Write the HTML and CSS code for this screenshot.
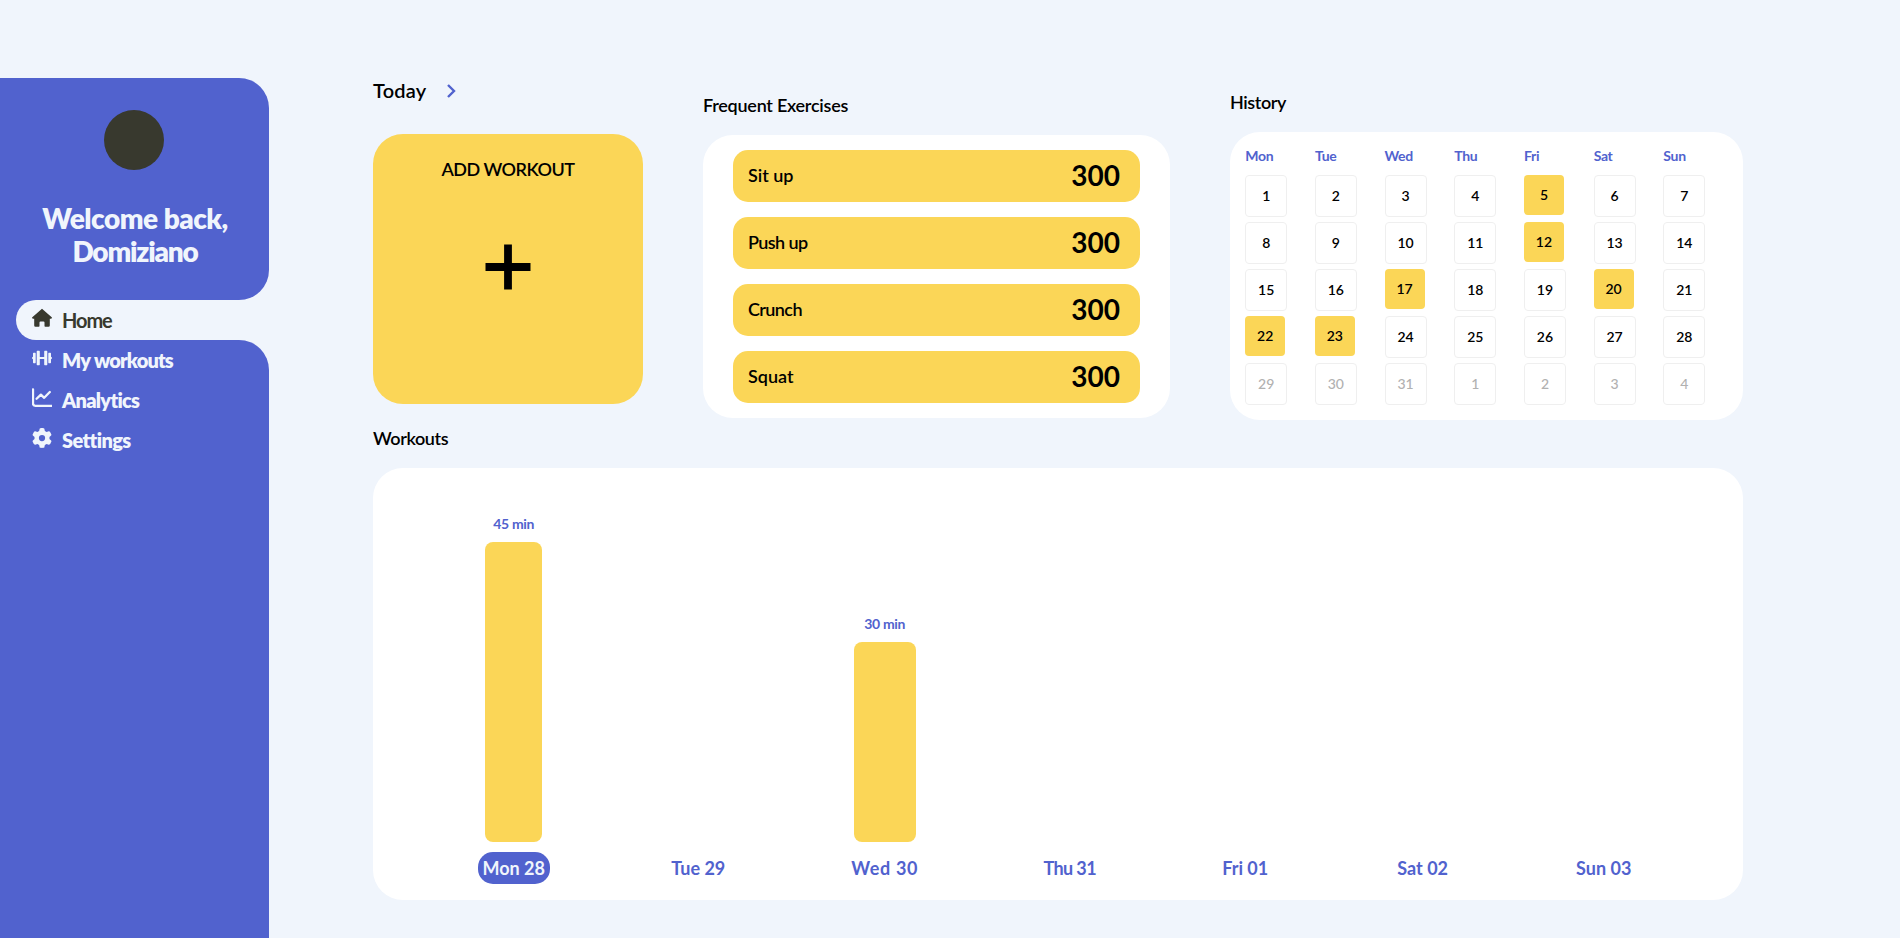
FILE: index.html
```
<!DOCTYPE html>
<html lang="en">
<head>
<meta charset="utf-8">
<title>Workout dashboard</title>
<link rel="stylesheet" href="styles.css">
</head>
<body>
<div class="app">
  <aside class="sidebar">
    <section class="profile">
      <div class="avatar"></div>
      <p class="greeting">Welcome back,<br><span class="username">Domiziano</span></p>
    </section>
    <div class="menu-active">
      <a class="menu-item active"><svg class="menu-icon" viewBox="0 0 20 20"><path d="M10 .8 20 9.600q-.2 1.200-1.200 1.200H17.800v6.700q0 1.300-1.300 1.300h-3.300q-.7 0-.7-.7v-3.600q0-1-1-1h-3q-1 0-1 1v3.600q0 .7-.7.700H3.500q-1.300 0-1.300-1.300v-6.700H1.200Q.2 10.800 0 9.600z"/></svg><span class="t-home">Home</span></a>
    </div>
    <nav class="menu">
      <a class="menu-item"><svg class="menu-icon" viewBox="0 0 20 20"><path d="M5.300 2.800h1.900q.6 0 .6.600v5.700h4.400V3.400q0-.6.600-.6h1.900q.6 0 .6.600v13.200q0 .6-.6.600h-1.900q-.6 0-.6-.6v-5.700H7.800v5.700q0 .6-.6.600H5.300q-.6 0-.6-.6V3.400q0-.6.600-.6zM1.700 4.800h1.400q.6 0 .6.600v9.200q0 .6-.6.600H1.700q-.7 0-.7-.6v-3.400q-1-.2-1-1.200t1-1.200V5.400q0-.6.700-.6zm15.200 0h1.400q.7 0 .7.600v3.400q1 .2 1 1.200t-1 1.200v3.400q0 .6-.7.600h-1.400q-.6 0-.6-.6V5.400q0-.6.600-.6z"/></svg><span class="t-workouts">My workouts</span></a>
      <a class="menu-item"><svg class="menu-icon" viewBox="0 0 20 20"><path class="line" d="M1 1.300v14.200q0 2.300 2.300 2.300H20M4.600 10.800l4.300-4.200 3.300 3.200 5.600-5.800"/></svg><span class="t-analytics">Analytics</span></a>
      <a class="menu-item"><svg class="menu-icon" viewBox="0 0 512 512"><path d="M495.900 166.600c3.200 8.700.5 18.400-6.400 24.600l-43.300 39.400c1.100 8.300 1.700 16.800 1.700 25.400s-.6 17.100-1.700 25.400l43.300 39.400c6.900 6.200 9.600 15.900 6.400 24.600-4.400 11.900-9.700 23.300-15.800 34.300l-4.700 8.100c-6.600 11-14 21.400-22.100 31.200-5.900 7.200-15.700 9.600-24.500 6.800l-55.700-17.700c-13.400 10.300-28.200 18.900-44 25.400l-12.500 57.100c-2 9.100-9 16.300-18.200 17.800-13.800 2.300-28 3.500-42.500 3.500s-28.700-1.200-42.500-3.500c-9.200-1.500-16.200-8.700-18.200-17.800l-12.500-57.100c-15.800-6.500-30.600-15.100-44-25.400L83.100 425.900c-8.800 2.800-18.600.3-24.500-6.800-8.100-9.800-15.500-20.200-22.100-31.200l-4.700-8.100c-6.100-11-11.400-22.400-15.800-34.300-3.200-8.700-.5-18.400 6.400-24.600l43.300-39.400C64.600 273.100 64 264.600 64 256s.6-17.100 1.700-25.400L22.400 191.200c-6.900-6.200-9.600-15.900-6.400-24.600 4.400-11.900 9.700-23.300 15.800-34.300l4.700-8.100c6.600-11 14-21.400 22.100-31.200 5.900-7.200 15.700-9.600 24.500-6.800l55.700 17.700c13.400-10.300 28.200-18.900 44-25.400l12.500-57.100c2-9.100 9-16.300 18.200-17.800C227.300 1.200 241.500 0 256 0s28.700 1.200 42.500 3.500c9.200 1.500 16.200 8.700 18.200 17.800l12.500 57.100c15.800 6.500 30.600 15.100 44 25.400l55.700-17.700c8.800-2.800 18.600-.3 24.500 6.800 8.100 9.800 15.500 20.200 22.100 31.200l4.700 8.100c6.100 11 11.400 22.400 15.800 34.300zM256 336a80 80 0 1 0 0-160 80 80 0 1 0 0 160z"/></svg><span class="t-settings">Settings</span></a>
    </nav>
  </aside>
  <main class="main">
    <div class="top">
      <section class="today">
        <h2 class="today-title">Today<svg class="chevron" viewBox="0 0 10 16"><path d="M2 2l6 6-6 6"/></svg></h2>
        <button class="add-card"><span class="add-label">ADD WORKOUT</span><svg class="plus" viewBox="0 0 46 46"><path d="M23 .5v45M.5 23h45"/></svg></button>
      </section>
      <section class="frequent">
        <h3 class="title frequent-title">Frequent Exercises</h3>
        <div class="exercise-list">
          <div class="exercise"><span class="exercise-name">Sit up</span><span class="exercise-count">300</span></div>
          <div class="exercise"><span class="exercise-name tight">Push up</span><span class="exercise-count">300</span></div>
          <div class="exercise"><span class="exercise-name tight">Crunch</span><span class="exercise-count">300</span></div>
          <div class="exercise"><span class="exercise-name">Squat</span><span class="exercise-count">300</span></div>
        </div>
      </section>
      <section class="history">
        <h3 class="title history-title">History</h3>
        <div class="calendar">
          <span class="weekday">Mon</span><span class="weekday">Tue</span><span class="weekday">Wed</span><span class="weekday">Thu</span><span class="weekday">Fri</span><span class="weekday">Sat</span><span class="weekday">Sun</span>
          <span class="day">1</span><span class="day">2</span><span class="day">3</span><span class="day">4</span><span class="day done">5</span><span class="day">6</span><span class="day">7</span>
          <span class="day">8</span><span class="day">9</span><span class="day">10</span><span class="day">11</span><span class="day done">12</span><span class="day">13</span><span class="day">14</span>
          <span class="day">15</span><span class="day">16</span><span class="day done">17</span><span class="day">18</span><span class="day">19</span><span class="day done">20</span><span class="day">21</span>
          <span class="day done">22</span><span class="day done">23</span><span class="day">24</span><span class="day">25</span><span class="day">26</span><span class="day">27</span><span class="day">28</span>
          <span class="day other">29</span><span class="day other">30</span><span class="day other">31</span><span class="day other">1</span><span class="day other">2</span><span class="day other">3</span><span class="day other">4</span>
        </div>
      </section>
    </div>
    <section class="workouts">
      <h3 class="title workouts-title">Workouts</h3>
      <div class="chart">
        <div class="column mon"><span class="minutes">45 min</span><div class="bar" style="height:300px"></div><span class="date current">Mon 28</span></div>
        <div class="column tue"><span class="date">Tue 29</span></div>
        <div class="column wed"><span class="minutes">30 min</span><div class="bar" style="height:200px"></div><span class="date">Wed 30</span></div>
        <div class="column thu"><span class="date">Thu 31</span></div>
        <div class="column fri"><span class="date">Fri 01</span></div>
        <div class="column sat"><span class="date">Sat 02</span></div>
        <div class="column sun"><span class="date">Sun 03</span></div>
      </div>
    </section>
  </main>
</div>
</body>
</html>
```
FILE: styles.css
```
* { box-sizing: border-box; }
:root { --bg: #f0f5fc; --purple: #5162ce; --yellow: #fbd657; --dark: #38392e; }
body { margin: 0; background: var(--bg); color: #000; font-family: Lato, "Liberation Sans", sans-serif; font-weight: 700; }
h2, h3, p { margin: 0; font-weight: 600; }
.app { display: flex; height: 938px; overflow: hidden; }

/* Sidebar */
.sidebar { width: 269px; padding-top: 78px; display: flex; flex-direction: column; flex-shrink: 0; }
.profile { height: 222px; padding: 32px 1px 0 0; display: flex; flex-direction: column; align-items: center; gap: 32px; background: var(--purple); border-radius: 0 30px 30px 0; }
.avatar { width: 60px; height: 60px; border-radius: 50%; background: var(--dark); }
.greeting { padding-left: 2px; font-size: 28px; line-height: 33px; font-weight: 800; text-align: center; color: var(--bg); letter-spacing: -0.5px; }
.username { letter-spacing: -1.200px; }
.menu-active { background: var(--purple); }
.menu-active .menu-item { margin-left: 16px; padding-left: 16px; background: var(--bg); border-radius: 20px 0 0 20px; color: var(--dark); font-weight: 700; }
.menu { flex: 1; background: var(--purple); border-top-right-radius: 30px; color: var(--bg); }
.menu-item { display: flex; align-items: center; gap: 10px; height: 40px; padding-left: 32px; font-size: 20px; line-height: 40px; font-weight: 800; }
.menu-icon { width: 20px; height: 20px; margin-bottom: 4px; fill: currentColor; }
.line { fill: none; stroke: currentColor; stroke-width: 2.300; stroke-linejoin: round; stroke-linecap: round; }
.t-home { letter-spacing: -1.100px; }
.t-workouts { letter-spacing: -0.85px; word-spacing: 1px; }
.t-analytics { letter-spacing: -0.7px; }
.t-settings { letter-spacing: -0.6px; }

/* Content */
.main { width: 1370px; margin-left: 104px; padding-top: 78px; }
.top { display: flex; height: 349px; }
.title { font-size: 18px; line-height: 23px; letter-spacing: -0.25px; }
.today { width: 270px; }
.today-title { display: flex; align-items: center; gap: 20px; font-size: 20px; line-height: 24px; letter-spacing: 0.2px; }
.chevron { width: 10px; height: 16px; margin-top: 2px; fill: none; stroke: var(--purple); stroke-width: 2.400; }
.add-card { display: flex; flex-direction: column; align-items: center; width: 270px; height: 270px; margin-top: 32px; padding: 24px 0 0; border: 0; border-radius: 30px; background: var(--yellow); font: inherit; font-weight: 600; color: inherit; }
.add-label { font-size: 18px; line-height: 22px; letter-spacing: -0.5px; }
.plus { width: 46px; height: 46px; margin-top: 64px; stroke: #000; stroke-width: 7.800; }

.frequent { width: 467px; margin-left: 60px; padding-top: 16px; }
.exercise-list { display: flex; flex-direction: column; gap: 15px; margin-top: 18px; padding: 15px 30px; background: #fff; border-radius: 30px; }
.exercise { display: flex; justify-content: space-between; align-items: center; height: 52px; padding: 0 20px 2px 15px; border-radius: 15px; background: var(--yellow); }
.exercise-name { font-size: 18px; line-height: 22px; font-weight: 600; }
.tight { letter-spacing: -0.6px; }
.exercise-count { font-size: 28px; line-height: 34px; font-weight: 700; }

.history { width: 513px; margin-left: 60px; padding-top: 13px; }
.history-title { letter-spacing: -0.4px; }
.calendar { display: grid; grid-template-columns: repeat(7, 69.7px); grid-template-rows: 29px repeat(5, 47px); height: 288px; margin-top: 18px; padding: 14px 0 0 15.200px; overflow: hidden; background: #fff; border-radius: 30px; }
.weekday { color: var(--purple); font-size: 14px; line-height: 20px; letter-spacing: -0.3px; }
.day { width: 42px; height: 42px; border: 1px solid #efefef; border-radius: 4px; font-size: 14px; line-height: 40px; text-align: center; font-weight: 600; }
.day.done { width: 40px; height: 40px; border: 0; background: var(--yellow); line-height: 40px; }
.day.other { color: #b1b1b1; font-weight: 500; }

/* Weekly chart */
.workouts-title { letter-spacing: -0.4px; }
.chart { display: flex; justify-content: center; align-items: flex-end; gap: 116.500px; height: 432px; margin-top: 18px; padding: 0 2.600px 16px 0; background: #fff; border-radius: 30px; }
.column { display: flex; flex-direction: column; align-items: center; }
.mon { width: 72px; }
.tue { width: 64px; }
.wed { width: 76px; }
.thu { width: 61px; }
.fri { width: 57px; }
.sat { width: 65px; }
.sun { width: 64px; }
.minutes { color: var(--purple); font-size: 14px; line-height: 20px; letter-spacing: -0.35px; }
.bar { margin: 8px 0 10px; border-radius: 8px; background: var(--yellow); }
.mon .bar { width: 57px; }
.wed .bar { width: 62px; }
.date { width: 100%; height: 32px; border-radius: 15px; text-align: center; color: var(--purple); font-size: 18px; line-height: 32px; white-space: nowrap; }
.wed .date { letter-spacing: 0.65px; }
.thu .date { letter-spacing: -0.6px; }
.current { background: var(--purple); color: var(--bg); font-weight: 700; }
```
